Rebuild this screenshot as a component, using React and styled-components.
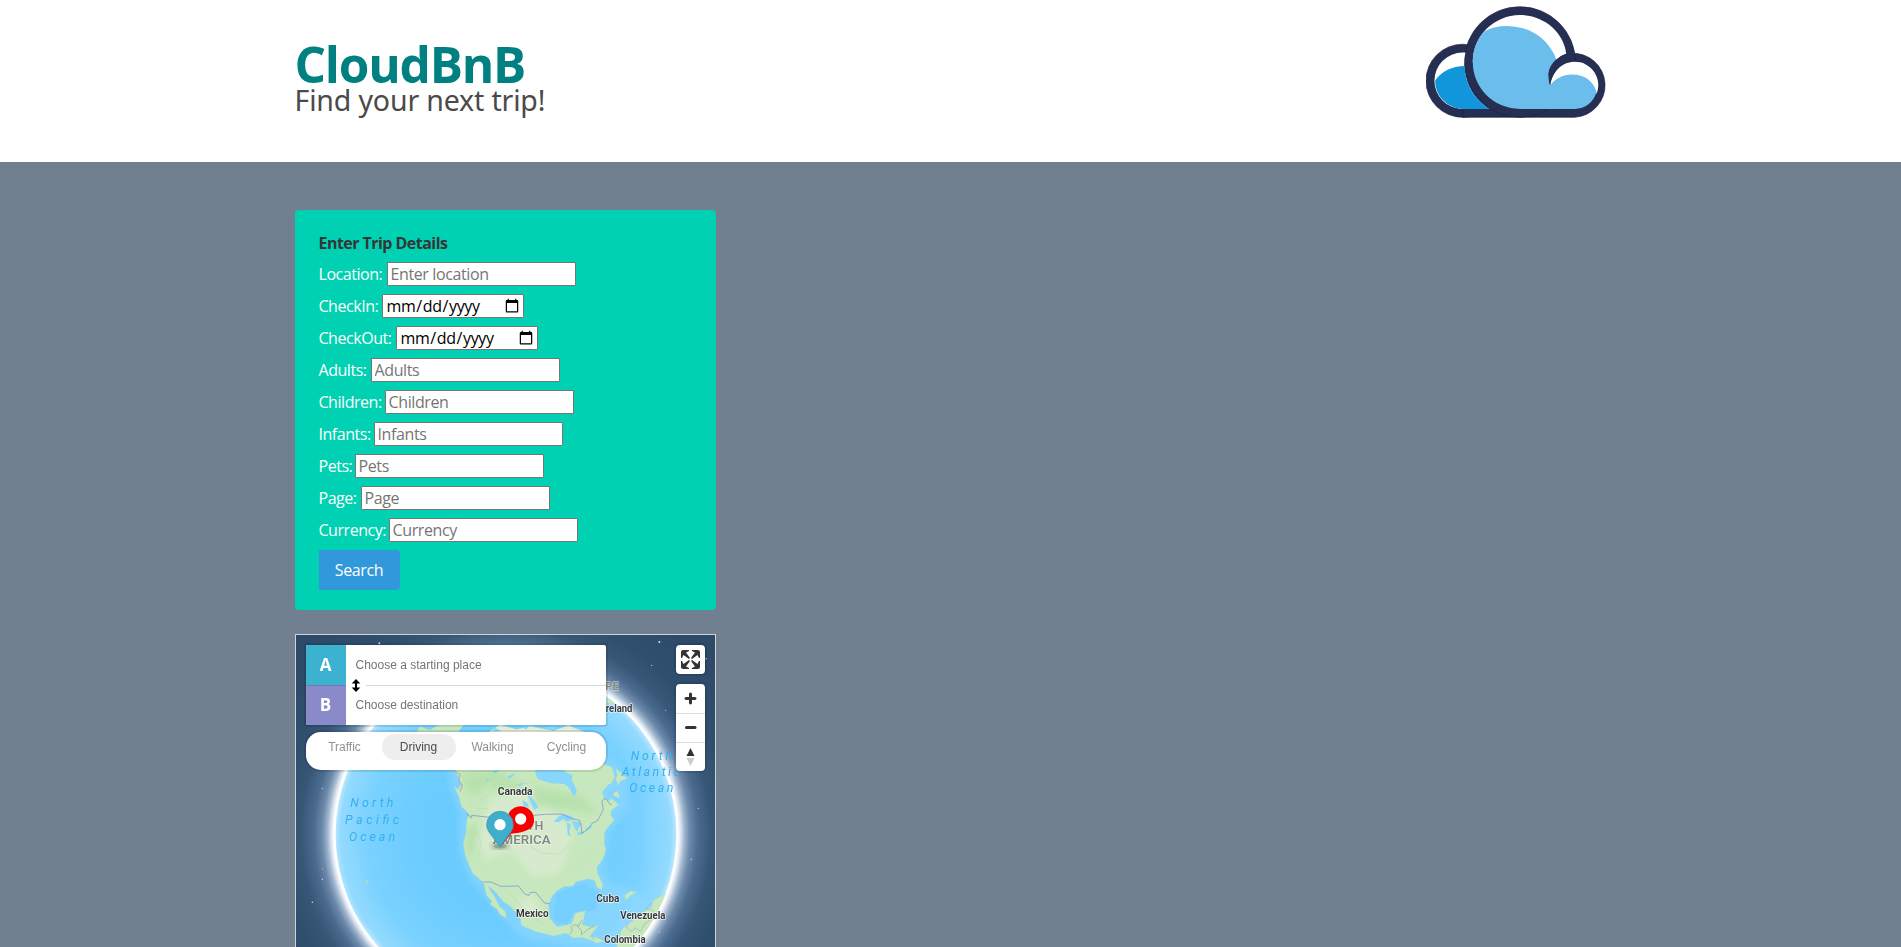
import React from "react";
import styled, { createGlobalStyle } from "styled-components";

const GlobalStyle = createGlobalStyle`
  *, *::before, *::after { box-sizing: border-box; }
  html, body { margin: 0; padding: 0; }
  body {
    font-family: "Open Sans", "Noto Sans", sans-serif;
    font-size: 16px;
    line-height: 24px;
    color: #4a4a4a;
    background: slategray;
  }
`;

const Page = styled.div`
  height: 100vh;
  overflow: hidden;
  background: slategray;
`;

const Header = styled.header`
  height: 162px;
  background: #fff;
`;

const Container = styled.div`
  width: 1312px;
  margin: 0 auto;
`;

const HeaderRow = styled(Container)`
  display: flex;
  justify-content: space-between;
  align-items: flex-start;
`;

const Brand = styled.div`
  padding-top: 39px;
`;

const Title = styled.h1`
  margin: 0;
  font-size: 49.5px;
  line-height: 50px;
  font-weight: 700;
  letter-spacing: ${(p) => p.$track};
  color: teal;
`;

const Subtitle = styled.p`
  margin: 0;
  font-family: "Noto Sans", "Open Sans", sans-serif;
  font-size: 28.5px;
  line-height: 22px;
  font-weight: 400;
  letter-spacing: ${(p) => p.$track};
  white-space: nowrap;
`;

const Logo = styled.svg`
  display: block;
  width: 181px;
  height: 130px;
`;

const Main = styled(Container)`
  padding-top: 48px;
`;

const Column = styled.div`
  width: 421px;
  display: flex;
  flex-direction: column;
  gap: 24px;
`;

const Card = styled.form`
  height: 400px;
  padding: 20px 24px;
  border-radius: 4px;
  background: #00d1b2;
  color: #fff;
`;

const CardTitle = styled.div`
  height: 28px;
  padding-top: 1px;
  font-weight: 700;
  letter-spacing: -0.54px;
  color: #363636;
`;

const Field = styled.label`
  display: flex;
  align-items: center;
  height: 32px;
`;

const FieldName = styled.span`
  flex: none;
  width: ${(p) => p.$width}px;
  white-space: nowrap;
  letter-spacing: -0.46px;
`;

const Input = styled.input`
  width: ${(p) => (p.type === "date" ? 142 : 189)}px;
  height: 24px;
  padding: ${(p) => (p.type === "date" ? "0 1px 0 3px" : "0 3px")};
  border: 1px solid #767676;
  border-radius: 1px;
  background: #fff;
  color: #000;
  font-family: inherit;
  font-size: 16px;
  letter-spacing: ${(p) => (p.type === "date" ? -0.4 : -0.38)}px;
  outline: none;
  &::placeholder { color: #757575; opacity: 1; }
`;

const SearchButton = styled.button`
  display: block;
  width: 81px;
  height: 40px;
  margin-top: 4px;
  padding: 0;
  border: 0;
  border-radius: 0 4px 4px 0;
  background: #3298dc;
  color: #fff;
  font: inherit;
  letter-spacing: -0.38px;
`;

const MapBox = styled.div`
  position: relative;
  height: 400px;
  border: 1px solid lightgray;
  overflow: hidden;
  font-family: "Liberation Sans", Arial, sans-serif;
`;

const Globe = styled.svg`
  display: block;
  width: 419px;
  height: 398px;
`;

const Directions = styled.div`
  position: absolute;
  top: 10px;
  left: 10px;
  width: 300px;
  display: flex;
  flex-direction: column;
  gap: 7px;
`;

const Places = styled.div`
  position: relative;
  height: 80px;
  border-radius: 2px;
  background: #fff;
  box-shadow: 0 0 0 2px rgba(0, 0, 0, 0.1);
  overflow: hidden;
`;

const Place = styled.div`
  display: flex;
  align-items: center;
  height: 40px;
  font-size: 12px;
  color: #757575;
`;

const PlaceTag = styled.span`
  display: flex;
  align-items: center;
  justify-content: center;
  width: 40px;
  height: 40px;
  margin-right: 10px;
  background: ${(p) => p.$color};
  color: #fff;
  font-family: "Open Sans", sans-serif;
  font-size: 17px;
  font-weight: 700;
  box-shadow: inset 0 1px 0 rgba(0, 0, 0, ${(p) => (p.$ruled ? 0.12 : 0)});
`;

const Divider = styled.div`
  position: absolute;
  top: 40px;
  left: 60px;
  right: 0;
  height: 1px;
  background: #d8d8d8;
`;

const SwapIcon = styled.svg`
  position: absolute;
  top: 34px;
  left: 45px;
  width: 10px;
  height: 13px;
`;

const Profiles = styled.div`
  display: flex;
  align-items: flex-start;
  height: 38px;
  padding: 2px;
  border-radius: 15px;
  background: #fff;
  box-shadow: 0 0 0 2px rgba(0, 0, 0, 0.1);
`;

const Profile = styled.span`
  flex: 1;
  height: 26px;
  border-radius: 13px;
  text-align: center;
  font-size: 12px;
  line-height: 26px;
  background: ${(p) => (p.$active ? "#eee" : "transparent")};
  color: ${(p) => (p.$active ? "#4b4b4b" : "#909090")};
`;

const Controls = styled.div`
  position: absolute;
  top: 10px;
  right: 10px;
  display: flex;
  flex-direction: column;
  gap: 10px;
`;

const ControlGroup = styled.div`
  width: 29px;
  border-radius: 4px;
  background: #fff;
  box-shadow: 0 0 0 2px rgba(0, 0, 0, 0.1);
  overflow: hidden;
`;

const Control = styled.div`
  height: 29px;
  & + & { border-top: 1px solid #ddd; }
  svg { display: block; width: 29px; height: 29px; margin-top: ${(p) => p.$lift || 0}px; }
`;

const FIELDS = [
  { name: "Location:", hint: "Enter location", width: 68 },
  { name: "CheckIn:", type: "date", width: 63 },
  { name: "CheckOut:", type: "date", width: 77 },
  { name: "Adults:", hint: "Adults", width: 52 },
  { name: "Children:", hint: "Children", width: 66 },
  { name: "Infants:", hint: "Infants", width: 55 },
  { name: "Pets:", hint: "Pets", width: 36 },
  { name: "Page:", hint: "Page", width: 42 },
  { name: "Currency:", hint: "Currency", width: 70 },
];

const STARS = [
  [268, 40, 3], [1108, 36, 3], [1085, 106, 2], [1249, 86, 2], [1127, 241, 1.6],
  [97, 475, 2], [118, 630, 1.5], [97, 717, 1.5], [97, 748, 2.2], [67, 817, 2.2],
  [1225, 535, 1.8], [1204, 688, 2], [1163, 676, 1.5], [1147, 760, 2], [1108, 905, 1.6],
];

function CloudLogo() {
  return (
    <Logo viewBox="49 0 538 388" preserveAspectRatio="none">
      <g fill="#262f52" stroke="#1b2040" strokeWidth="2">
        <circle cx="158" cy="241" r="109" />
        <path d="M491 350H158V200L400 150L480 159A95.5 95.5 0 1 1 491 350Z" />
        <circle cx="328" cy="185" r="165" />
      </g>
      <path d="M236 325H158A84 84 0 0 1 158 157H166Q158 195 168 230Q182 288 236 325Z" fill="#fff" />
      <path d="M236 325H158A84 84 0 0 1 76 240Q107 198 164 197Q165 275 236 325Z" fill="#1296db" />
      <path d="M328 45A140 140 0 0 0 188 185L300 250L437 178Q449 166 466 160C458 96 400 45 328 45Z" fill="#fff" />
      <path d="M418 255C425 210 455 184 491 184A70 70 0 0 1 556 280C540 250 515 235 484 235Z" fill="#fff" />
      <path d="M222 94C244 82 270 77 296 78C362 80 414 118 437 178C420 192 414 208 414 225Q414 244 418 255C430 236 455 222 484 222C519 222 546 241 556 274C548 305 522 325 491 325H328A140 140 0 0 1 188 185C188 150 200 118 222 94Z" fill="#6bbdec" />
      <path d="M480 159C443 163 413 193 413 225Q413 244 418 255C424 215 452 184 491 183Z" fill="#262f52" />
    </Logo>
  );
}

function MapLabel({ x, y, w, size = 30, country = true, children }) {
  return (
    <text
      x={x}
      y={y}
      textLength={w}
      lengthAdjust="spacingAndGlyphs"
      fontSize={size}
      fontWeight={country ? 700 : 600}
      fill={country ? "#36383a" : "#808a80"}
      stroke="#fff"
      strokeOpacity={country ? 0.75 : 0.5}
      strokeWidth="4"
      strokeLinejoin="round"
      paintOrder="stroke"
    >
      {children}
    </text>
  );
}

function OceanLabel({ x, y, w, children }) {
  return (
    <text x={x} y={y} textLength={w} fontSize="37" fontStyle="italic" fill="#35b0ee">
      {children}
    </text>
  );
}

function GlobeMap() {
  return (
    <Globe viewBox="18 15 1257 1194" fontFamily="Roboto, sans-serif">
      <defs>
        <radialGradient id="space" gradientUnits="userSpaceOnUse" cx="648" cy="612" r="800">
          <stop offset="0.645" stopColor="#fff" />
          <stop offset="0.655" stopColor="#dbe5f0" />
          <stop offset="0.67" stopColor="#9fb4cc" />
          <stop offset="0.69" stopColor="#6c89aa" />
          <stop offset="0.72" stopColor="#4b6b8f" />
          <stop offset="0.77" stopColor="#385777" />
          <stop offset="0.84" stopColor="#304e6e" />
          <stop offset="1" stopColor="#2d4a69" />
        </radialGradient>
        <radialGradient id="ocean" gradientUnits="userSpaceOnUse" cx="648" cy="612" r="516">
          <stop offset="0" stopColor="#67caff" />
          <stop offset="0.5" stopColor="#6bccff" />
          <stop offset="0.8" stopColor="#79d1ff" />
          <stop offset="0.96" stopColor="#93daff" />
          <stop offset="0.985" stopColor="#b4e5fe" />
          <stop offset="1" stopColor="#fff" />
        </radialGradient>
        <clipPath id="disc"><circle cx="648" cy="612" r="513" /></clipPath>
        <filter id="soft"><feGaussianBlur stdDeviation="9" /></filter>
        <clipPath id="landClip">
          <path d="M478 390L500 450L492 472L506 495L515 530L538 553L530 570L528 608L520 640L525 674L535 700L548 730L574 752L582 765L620 775L640 800L660 828L690 860L695 885L740 905L790 918L832 912L840 885L800 888L778 860L780 800L800 780L850 765L900 745L945 650L960 570L930 400Z" />
        </clipPath>
      </defs>

      <rect x="18" y="15" width="1257" height="1194" fill="url(#space)" />
      {STARS.map(([x, y, r]) => (
        <circle key={`${x}-${y}`} cx={x} cy={y} r={r} fill="#d5e0ea" />
      ))}
      <circle cx="648" cy="612" r="516" fill="url(#ocean)" />

      <g clipPath="url(#disc)">
        <g fill="#92d9ff" opacity="0.55" filter="url(#soft)">
          <path d="M470 400L480 480L505 550L505 650L528 730L580 800L650 880L700 925L850 950L1000 940L1110 850L1040 780L960 760L945 700L965 600L1020 530L1010 440L960 380Z" />
          <path d="M140 560L180 640L230 760L230 900L180 850L130 700Z" opacity="0.5" />
          <path d="M1060 500L1110 560L1130 760L1090 760L1060 650Z" opacity="0.5" />
        </g>
        <path d="M800 790L880 760L930 790L915 840L850 850L830 885L790 870Z" fill="#75cfff" />
        <path d="M150 560Q165 640 215 700" fill="none" stroke="#94dbff" strokeWidth="2" />

        <g fill="#c7e8be" stroke="#a8dcc3" strokeWidth="1.5">
          <path d="M390 290L420 300L445 285H520L505 305H380Z" />
          <path d="M600 303L630 284L680 298L720 288L790 302L835 286L930 325L900 342H590Z" fill="#e3eddc" />
          <path d="M940 205L966 211L982 222L955 219Z" />
          <path d="M478 390L500 430L515 463L503 478L492 470L506 498L515 530L538 553L530 570L528 608L520 640L525 674L535 700L548 730L574 752L583 765L590 797L605 812L602 824L620 836L632 855L650 864L646 844L630 832L615 802L598 777L595 767L616 786L640 815L660 828L690 860L694 886L735 904L790 918L828 909L849 924L875 922L899 929L920 939L944 934L917 922L899 920L924 887L898 890L877 884L886 842L856 849L844 882L801 890L779 864L776 824L787 798L800 783L822 770L848 768L857 756L896 746L914 752L922 773L936 779L938 762L922 728L921 711L938 689L948 658L943 643L943 610L951 595L973 570L963 558L963 543L986 524L960 501L945 509L936 486L960 470L974 440L965 411L940 403L915 390Z" />
          <path d="M978 415L1001 437L1012 445L994 452L984 464L976 446L982 437Z" />
          <path d="M970 490L983 483L989 503L972 498Z" />
          <path d="M1004 796L1023 783L1040 787L1020 798L1006 811Z" />
          <path d="M946 810L976 824L958 820Z" />
          <path d="M985 930L994 900L1027 873L1055 849L1084 832L1090 812L1127 790V1050H960Z" />
          <path d="M227 749L235 757L229 758Z" fill="#eed9a9" />
        </g>

        <g clipPath="url(#landClip)">
          <g fill="#dcebd2" opacity="0.75" filter="url(#soft)">
            <path d="M605 500L730 480L790 540L850 610L810 730L730 740L660 660L590 690L560 640L580 560Z" />
            <path d="M720 790L755 840L710 858L680 820Z" />
          </g>
          <g fill="#b1dfa6" opacity="0.7" filter="url(#soft)">
            <path d="M520 430L620 420L700 470L635 485L585 460L570 500L530 490Z" />
            <path d="M730 470L880 500L920 550L820 535L725 530Z" />
            <path d="M530 590L565 590L545 690L530 650Z" />
          </g>
          <g fill="none" stroke="#b7dcb2" strokeWidth="1.6">
            <path d="M510 430L530 462L575 450L602 491L570 510M530 501L560 535L595 537M550 580L575 640L560 690L591 720M720 650L760 670L810 672L844 640M670 438L705 462L735 452M755 500L790 524L830 498L880 540" />
            <path d="M650 780L690 825L721 855L760 884M850 723L883 690L918 655" />
          </g>
        </g>

        <g fill="#87d6fb">
          <path d="M733 416L743 447L782 460L824 462L838 474L848 494L857 496L860 484L852 462L846 452L847 435L827 427L811 404H730Z" />
          <path d="M939 482L957 462L980 458L982 466L955 487L954 502L965 501L960 513L945 505Z" />
          <path d="M791 575L808 558L825 552L848 561L852 568L828 575L821 566L805 577Z" />
          <path d="M831 577L842 585L838 604L842 622L833 613Z" />
          <path d="M846 574L872 576L876 586L867 589L861 606L849 583Z" />
          <path d="M862 608L884 603L878 612L864 616ZM884 597L904 585L904 593L889 601Z" />
          <path d="M710 487L735 515L745 532L733 540L720 514ZM697 509L715 521L716 534L700 526Z" />
          <path d="M650 440L678 429L660 446ZM605 424L628 421L616 432ZM682 462L706 458L690 468ZM585 449L600 444L593 453Z" />
          <path d="M614 293L635 304H608ZM695 289L708 299L722 285ZM764 291L790 304L797 290Z" />
        </g>

        <g fill="none" stroke="#8b9ccb" strokeWidth="2.6" strokeLinejoin="round">
          <path d="M530 552L545 564V556L590 561H650L732 556L766 553L813 552L850 567L869 571L874 592L876 610L895 597L907 579L922 573L940 539L936 515L943 505L951 509L957 520L965 524" />
          <path d="M575 756H603L632 769L686 768L703 791L716 797L721 787H737L764 819L780 821" />
          <path d="M488 420L510 433L506 452L517 465L510 485" stroke="#a3a4bb" />
          <path d="M838 915L848 900L842 893L853 884L866 888L875 870M862 889L874 901L875 912M872 916L893 898L914 888M905 922L913 928" stroke="#92a2ae" strokeWidth="2" />
          <path d="M1015 879L1010 893L1026 904L1035 893L1052 904L1064 882L1080 870L1100 855M1085 817L1068 835L1091 842" stroke="#a5b1b1" strokeWidth="2" />
        </g>
      </g>
      <circle cx="648" cy="612" r="514" fill="none" stroke="#fff" strokeWidth="5" />

      <OceanLabel x={181} y={532} w={129}>North</OceanLabel>
      <OceanLabel x={165} y={582} w={162}>Pacific</OceanLabel>
      <OceanLabel x={177} y={632} w={138}>Ocean</OceanLabel>
      <OceanLabel x={1022} y={391} w={124}>North</OceanLabel>
      <OceanLabel x={995} y={439} w={174}>Atlantic</OceanLabel>
      <OceanLabel x={1018} y={487} w={132}>Ocean</OceanLabel>

      <MapLabel x={862} y={180} w={124} size={35} country={false}>EUROPE</MapLabel>
      <MapLabel x={939} y={245} w={88}>Ireland</MapLabel>
      <MapLabel x={623} y={496} w={105}>Canada</MapLabel>
      <MapLabel x={635} y={599} w={125} size={38} country={false}>NORTH</MapLabel>
      <MapLabel x={608} y={642} w={174} size={38} country={false}>AMERICA</MapLabel>
      <MapLabel x={678} y={861} w={98}>Mexico</MapLabel>
      <MapLabel x={919} y={816} w={69}>Cuba</MapLabel>
      <MapLabel x={991} y={867} w={135}>Venezuela</MapLabel>
      <MapLabel x={943} y={938} w={124}>Colombia</MapLabel>

      <path d="M630 652L652 608C646 592 654 566 657 548A40 40 0 1 1 726 591C713 604 687 609 664 611Z" fill="#f90000" />
      <circle cx="692" cy="567" r="17" fill="#fff" />
      <ellipse cx="630" cy="648" rx="27" ry="10" fill="#263720" opacity="0.4" filter="url(#soft)" />
      <ellipse cx="630" cy="648" rx="20" ry="7" fill="#263720" opacity="0.2" />
      <path d="M630 651L599 609C593 600 590 593 590 584A40 40 0 0 1 670 584C670 593 667 600 661 609Z" fill="#3faecb" stroke="#3197b3" strokeWidth="2" />
      <circle cx="630" cy="584" r="17" fill="#fff" />
    </Globe>
  );
}

function MapControls() {
  return (
    <Controls>
      <ControlGroup>
        <Control>
          <svg viewBox="0 0 29 29" fill="#333">
            <path d="M24 16v5.5c0 1.75-.75 2.5-2.5 2.5H16v-1l3-1.5-4-5.5 1-1 5.5 4 1.5-3h1zM6 16l1.5 3 5.5-4 1 1-4 5.5 3 1.5v1H7.5C5.75 24 5 23.25 5 21.5V16h1zm7-11v1l-3 1.5 4 5.5-1 1-5.5-4L6 13H5V7.500C5 5.750 5.750 5 7.500 5H13zm11 2.500c0-1.750-.75-2.500-2.500-2.500H16v1l3 1.500-4 5.500 1 1 5.500-4 1.500 3h1V7.500z" />
          </svg>
        </Control>
      </ControlGroup>
      <ControlGroup>
        <Control>
          <svg viewBox="0 0 29 29" fill="#333">
            <path d="M14.500 8.500c-.75 0-1.500.75-1.500 1.500v3h-3c-.75 0-1.500.75-1.500 1.500S9.250 16 10 16h3v3c0 .75.75 1.500 1.500 1.500S16 19.750 16 19v-3h3c.75 0 1.500-.75 1.500-1.500S19.750 13 19 13h-3v-3c0-.75-.75-1.500-1.500-1.500z" />
          </svg>
        </Control>
        <Control $lift={-1}>
          <svg viewBox="0 0 29 29" fill="#333"><rect x="9" y="13" width="11.500" height="3" rx="1.500" /></svg>
        </Control>
        <Control $lift={-1}>
          <svg viewBox="0 0 29 29"><path d="M10.500 14l4-8 4 8z" fill="#333" /><path d="M10.500 16l4 8 4-8z" fill="#ccc" /></svg>
        </Control>
      </ControlGroup>
    </Controls>
  );
}

export default function App() {
  return (
    <Page>
      <GlobalStyle />
      <Header>
        <HeaderRow>
          <Brand>
            <Title $track="-1.2px">CloudBnB</Title>
            <Subtitle $track="-0.15px">Find your next trip!</Subtitle>
          </Brand>
          <CloudLogo />
        </HeaderRow>
      </Header>
      <Main>
        <Column>
          <Card>
            <CardTitle>Enter Trip Details</CardTitle>
            {FIELDS.map(({ name, hint, type = "text", width }) => (
              <Field key={name}>
                <FieldName $width={width}>{name}</FieldName>
                <Input type={type} placeholder={hint} />
              </Field>
            ))}
            <SearchButton type="button">Search</SearchButton>
          </Card>
          <MapBox>
            <GlobeMap />
            <Directions>
              <Places>
                <Place><PlaceTag $color="#3bb2d0">A</PlaceTag>Choose a starting place</Place>
                <Place><PlaceTag $color="#8a8acb" $ruled>B</PlaceTag>Choose destination</Place>
                <Divider />
                <SwapIcon viewBox="0 0 10 13"><path d="M5 0L9.300 4.500H6V8.500H9.300L5 13L.7 8.500H4V4.500H.7Z" /></SwapIcon>
              </Places>
              <Profiles>
                <Profile>Traffic</Profile>
                <Profile $active>Driving</Profile>
                <Profile>Walking</Profile>
                <Profile>Cycling</Profile>
              </Profiles>
            </Directions>
            <MapControls />
          </MapBox>
        </Column>
      </Main>
    </Page>
  );
}
